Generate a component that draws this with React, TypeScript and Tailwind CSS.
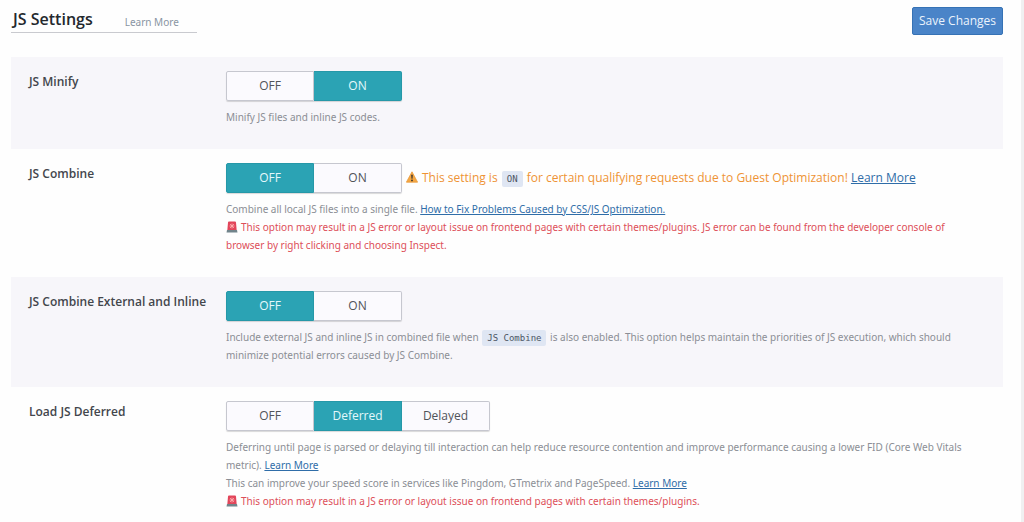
import { useId, useState, type ReactNode } from "react";

interface ToggleProps {
  label: string;
  options: string[];
  initial: string;
}

const Toggle: React.FC<ToggleProps> = ({ label, options, initial }) => {
  const name = useId();
  const [selected, setSelected] = useState(initial);

  return (
    <div
      role="radiogroup"
      aria-label={label}
      className="flex h-[30px] shrink-0 rounded-xs shadow-[0_1px_1px_rgba(0,0,0,0.15)]"
    >
      {options.map((option) => (
        <label
          key={option}
          className="relative flex w-[88px] cursor-pointer items-center justify-center border border-l-0 border-[#c6c7cf] bg-[#fbfafe] text-[12px] text-[#50535a] first:rounded-l-xs first:border-l last:rounded-r-xs has-checked:border-[#2598a8] has-checked:bg-[#2ba3b4] has-checked:text-[#e4f8fb]"
        >
          <input
            type="radio"
            name={name}
            value={option}
            checked={selected === option}
            onChange={() => setSelected(option)}
            className="sr-only"
          />
          {option}
        </label>
      ))}
    </div>
  );
};

const Code = ({ children }: { children: ReactNode }) => (
  <code className="mx-px rounded-xs bg-[#dfe6f3] px-[5px] py-[3px] font-['DejaVu_Sans_Mono',monospace] text-[9px] leading-none text-[#4b5563]">
    {children}
  </code>
);

const TextLink = ({ children }: { children: ReactNode }) => (
  <a href="#" className="text-[#2f6da8] underline">
    {children}
  </a>
);

const WarningIcon = () => (
  <svg viewBox="0 0 12 12" className="mr-1 inline-block size-3 align-[-1px]" aria-hidden="true">
    <path d="M6 .8 11.6 11.2H.4Z" fill="#f5a742" stroke="#e99a3c" strokeWidth=".8" strokeLinejoin="round" />
    <path d="M5.2 3.8h1.6l-.3 4h-1z" fill="#33302c" />
    <circle cx="6" cy="9.4" r=".9" fill="#33302c" />
  </svg>
);

const SirenIcon = () => (
  <svg viewBox="0 0 12 12" className="mr-[3px] inline-block size-3 align-[-2px]" aria-hidden="true">
    <path d="M2 1.5Q2 .5 3 .5h6q1 0 1 1l.7 8H1.3z" fill="#e2455a" />
    <path d="m4 3 4 4M8 3 4 7M6 2.5v5M3.5 5h5" stroke="#ffb3b3" strokeWidth=".8" />
    <path d="M1 9h10l.5 2.5H.5z" fill="#71848b" />
  </svg>
);

const ThemeWarning = ({ children }: { children?: ReactNode }) => (
  <p className="text-[#dd4f59]">
    <SirenIcon />
    This option may result in a JS error or layout issue on frontend pages with certain themes/plugins.
    {children}
  </p>
);

interface SettingRowProps {
  title: string;
  options?: string[];
  initial: string;
  notice?: ReactNode;
  children: ReactNode;
}

const SettingRow: React.FC<SettingRowProps> = ({
  title,
  options = ["OFF", "ON"],
  initial,
  notice,
  children,
}) => (
  <section className="flex pt-[14px] pr-6 pb-[23px] pl-[18px] odd:bg-[#f7f6fa]">
    <h3 className="w-[197px] shrink-0 pt-px text-[12px] leading-5 font-semibold text-[#43464c]">
      {title}
    </h3>
    <div className="min-w-0 flex-1">
      <div className="flex items-center gap-1">
        <Toggle label={title} options={options} initial={initial} />
        {notice}
      </div>
      <div className="mt-[7px] font-['Noto_Sans',sans-serif] text-[10px] leading-[18px] text-[#8b8e95]">
        {children}
      </div>
    </div>
  </section>
);

export default function App() {
  return (
    <div className="border-r-3 border-[#f0f0f1] bg-[#fefefe] font-['Open_Sans',sans-serif]">
      <main className="min-h-screen pt-[7px] pr-[18px] pl-[11px]">
        <header className="flex items-start justify-between pb-[22px]">
          <div className="flex items-center gap-8 border-b border-[#c9cacf] pr-[18px] pl-[2px]">
            <h2 className="text-[16px] leading-[25px] font-semibold text-[#23282d]">JS Settings</h2>
            <a href="#" className="pt-[4px] font-['Noto_Sans',sans-serif] text-[10px] leading-4 text-[#8995a3]">
              Learn More
            </a>
          </div>
          <button
            type="button"
            className="h-7 rounded-xs border border-[#3672b5] bg-[#4a84c8] px-[6px] text-[12px] text-[#eaf3fc]"
          >
            Save Changes
          </button>
        </header>

        <div>
          <SettingRow title="JS Minify" initial="ON">
            <p>Minify JS files and inline JS codes.</p>
          </SettingRow>

          <SettingRow
            title="JS Combine"
            initial="OFF"
            notice={
              <p className="text-[12px] leading-[18px] text-[#ee9335]">
                <WarningIcon />
                This setting is <Code>ON</Code> for certain qualifying requests due to Guest Optimization!{" "}
                <TextLink>Learn More</TextLink>
              </p>
            }
          >
            <p>
              Combine all local JS files into a single file.{" "}
              <TextLink>How to Fix Problems Caused by CSS/JS Optimization.</TextLink>
            </p>
            <ThemeWarning>
              {" "}
              JS error can be found from the developer console of browser by right clicking and choosing Inspect.
            </ThemeWarning>
          </SettingRow>

          <SettingRow title="JS Combine External and Inline" initial="OFF">
            <p>
              Include external JS and inline JS in combined file when <Code>JS Combine</Code> is also enabled. This
              option helps maintain the priorities of JS execution, which should minimize potential errors caused by
              JS Combine.
            </p>
          </SettingRow>

          <SettingRow title="Load JS Deferred" options={["OFF", "Deferred", "Delayed"]} initial="Deferred">
            <p>
              Deferring until page is parsed or delaying till interaction can help reduce resource contention and
              improve performance causing a lower FID (Core Web Vitals metric). <TextLink>Learn More</TextLink>
            </p>
            <p>
              This can improve your speed score in services like Pingdom, GTmetrix and PageSpeed.{" "}
              <TextLink>Learn More</TextLink>
            </p>
            <ThemeWarning />
          </SettingRow>
        </div>
      </main>
    </div>
  );
}
